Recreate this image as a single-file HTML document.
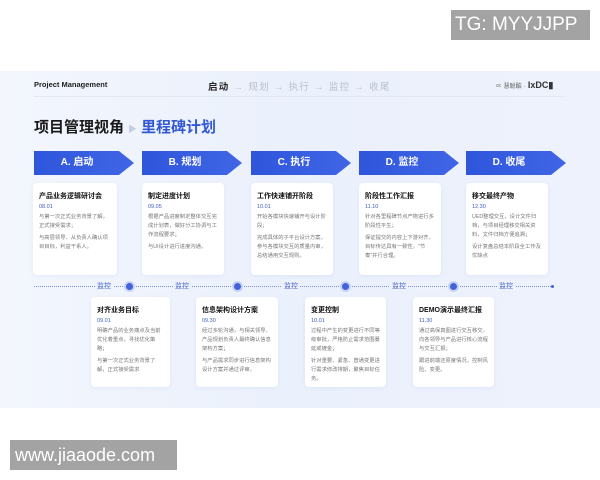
<!DOCTYPE html>
<html><head><meta charset="utf-8"><style>
*{margin:0;padding:0;box-sizing:border-box}
body{width:600px;height:480px;background:#fff;position:relative;overflow:hidden;font-family:"Liberation Sans","Noto Sans CJK SC",sans-serif}
.tg{position:absolute;left:451px;top:10px;width:139px;height:30px;background:#a3a3a3;color:#fff;font-size:19px;line-height:30px;padding-left:4px}
.wm{position:absolute;left:10px;top:440px;width:167px;height:30px;background:#a3a3a3;color:#fff;font-size:18px;line-height:30px;padding-left:5px}
.panel{position:absolute;left:0;top:71px;width:600px;height:337px;background:linear-gradient(90deg,#f3f6fd,#eaf0fc 50%,#eef2fc)}
.hdr{position:absolute;top:80px;font-size:7.5px;font-weight:bold;color:#222}
.nav{position:absolute;left:208px;top:79px;font-size:9.5px;color:#b8bfcc;letter-spacing:1.3px}
.nav b{color:#222}
.line{position:absolute;left:34px;top:96px;width:532px;height:1px;background:#e3e8f2}
.title{position:absolute;left:34px;top:116px;font-size:15px;font-weight:bold;color:#1a1a1a}
.title span{color:#3358d4}
.title i{font-style:normal;color:#c5cde0;font-size:9px;vertical-align:middle;margin:0 4px}
.arr{position:absolute;top:151px;height:24px;width:100px;background:linear-gradient(90deg,#2f55dc,#4066e6);clip-path:polygon(0 0,85% 0,100% 50%,85% 100%,0 100%);color:#fff;font-weight:bold;font-size:10px;line-height:24px;text-align:center;padding-right:14px}
.card{position:absolute;background:#fff;border-radius:4px;padding:8px 6px;box-shadow:0 1px 4px rgba(60,90,180,.08)}
.card h4{font-size:7px;color:#111;margin-bottom:3px}
.card .d{font-size:5.5px;color:#3a5bbf;margin-bottom:3px}
.card p{font-size:5.3px;color:#777;line-height:9px;margin-bottom:3px}
.tl{position:absolute;left:34px;top:286px;width:519px;border-top:1px dotted #7b8fd8}
.lbl{position:absolute;top:281px;font-size:7px;color:#4a66cc;background:#eef2fc;padding:0 2px}
.dot{position:absolute;top:283px;width:7px;height:7px;border-radius:50%;background:#4462da;box-shadow:0 0 0 2px #c9d3f5}
</style></head><body>
<div class="tg">TG: MYYJJPP</div>
<div class="panel"></div>
<div class="hdr" style="left:34px">Project Management</div>
<div class="nav"><b>启动</b> → 规划 → 执行 → 监控 → 收尾</div>
<div class="hdr" style="left:496px;font-size:9px;color:#333"><span style="font-size:6px;font-weight:normal;color:#666">∝ 慧聪酷 ·</span> IxDC▮</div>
<div class="line"></div>
<div class="title">项目管理视角<i>▶</i><span>里程碑计划</span></div>

<div class="arr" style="left:34px">A. 启动</div>
<div class="arr" style="left:142px">B. 规划</div>
<div class="arr" style="left:251px">C. 执行</div>
<div class="arr" style="left:359px">D. 监控</div>
<div class="arr" style="left:466px">D. 收尾</div>

<div class="card" style="left:33px;top:183px;width:84px;height:92px"><h4>产品业务逻辑研讨会</h4><div class="d">08.01</div><p>与第一次正式业务背景了解，正式接受需求；</p><p>与高层领导、从负责人确认项目目标，利益干系人。</p></div>
<div class="card" style="left:142px;top:183px;width:82px;height:92px"><h4>制定进度计划</h4><div class="d">09.05</div><p>根据产品进度制定整体交互完成计划表，做好分工协调与工作流程要求；</p><p>与UI设计进行进度沟通。</p></div>
<div class="card" style="left:251px;top:183px;width:82px;height:92px"><h4>工作快速铺开阶段</h4><div class="d">10.01</div><p>开始各模块快速铺开与设计阶段；</p><p>完成具体的子平台设计方案，参与各模块交互的质量内审，总结通用交互规则。</p></div>
<div class="card" style="left:359px;top:183px;width:82px;height:92px"><h4>阶段性工作汇报</h4><div class="d">11.10</div><p>针对各里程碑节点产物进行多阶段性平生；</p><p>保证提交的内容上下游对齐，目标传达具有一致性，"节奏"并行合理。</p></div>
<div class="card" style="left:466px;top:183px;width:82px;height:92px"><h4>移交最终产物</h4><div class="d">12.30</div><p>UED整理交互、设计文件归档，与项目经理移交相关资料，文件归档方便追溯；</p><p>设计复盘总结本阶段全工作及优缺点</p></div>

<div class="tl"></div>
<div class="lbl" style="left:95px">监控</div>
<div class="lbl" style="left:173px">监控</div>
<div class="lbl" style="left:282px">监控</div>
<div class="lbl" style="left:390px">监控</div>
<div class="lbl" style="left:497px">监控</div>
<div class="dot" style="left:126px"></div>
<div class="dot" style="left:234px"></div>
<div class="dot" style="left:342px"></div>
<div class="dot" style="left:450px"></div>
<div style="position:absolute;left:551px;top:285px;width:3px;height:3px;border-radius:50%;background:#4462da"></div>

<div class="card" style="left:91px;top:297px;width:79px;height:90px"><h4>对齐业务目标</h4><div class="d">09.01</div><p>明确产品的业务痛点及当前优化着重点，寻找优化策略；</p><p>与第一次正式业务背景了解，正式接受需求</p></div>
<div class="card" style="left:196px;top:297px;width:82px;height:90px"><h4>信息架构设计方案</h4><div class="d">09.30</div><p>经过多轮沟通，与相关领导、产品规划负责人最终确认信息架构方案；</p><p>与产品需求同步进行信息架构设计方案并通过评审。</p></div>
<div class="card" style="left:305px;top:297px;width:81px;height:90px"><h4>变更控制</h4><div class="d">10.01</div><p>过程中产生的变更进行不同等级审批，严格防止需求范围蔓延或镀金；</p><p>针对重要、紧急、普通变更进行需求修改排期，聚焦目标任务。</p></div>
<div class="card" style="left:413px;top:297px;width:81px;height:90px"><h4>DEMO演示最终汇报</h4><div class="d">11.30</div><p>通过高保真图进行交互移交，向各领导与产品进行核心流程与交互汇报；</p><p>跟进前端还原度情况，控制风险、变更。</p></div>

<div class="wm">www.jiaaode.com</div>
</body></html>
